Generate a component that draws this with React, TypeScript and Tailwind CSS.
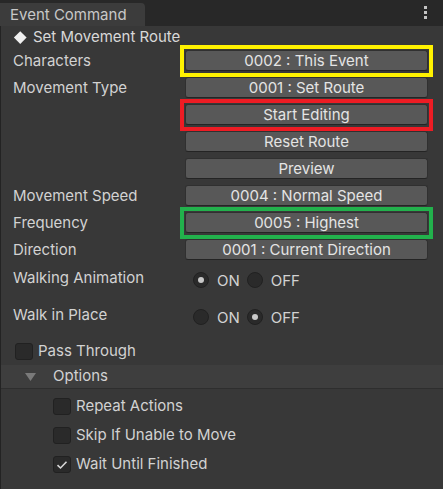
import React from "react";

const font = { fontFamily: "Inter, 'Noto Sans', sans-serif" };

function Btn({ children }: { children: React.ReactNode }) {
  return (
    <div className="w-[243px] h-[21px] rounded-[3px] bg-[#585858] border border-[#303030] border-b-[#242424] flex items-center justify-center text-[#e4e4e4] text-[15px] leading-none">
      {children}
    </div>
  );
}

function Row({ label, children, frame }: { label?: string; children: React.ReactNode; frame?: string }) {
  return (
    <div className="flex items-center h-[20px]">
      <div className="w-[184px] pl-[12px] text-[15px] text-[#d2d2d2] relative top-[1px]">{label}</div>
      <div className="relative">
        {frame && (
          <div className={`absolute left-[-5px] right-[-5px] top-[-5px] bottom-[-6px] border-[4px] ${frame}`} />
        )}
        {children}
      </div>
    </div>
  );
}

function Radio({ on }: { on: boolean }) {
  return (
    <div className="w-[16px] h-[16px] rounded-full bg-[#2a2a2a] border border-[#212121] flex items-center justify-center">
      {on && <div className="w-[6px] h-[6px] rounded-full bg-[#c8c8c8]" />}
    </div>
  );
}

function RadioRow({ label, on }: { label: string; on: boolean }) {
  return (
    <div className="flex items-center h-[20px]">
      <div className="w-[192px] pl-[12px] text-[15px] text-[#d2d2d2] relative top-[1px]">{label}</div>
      <div className="flex items-center mt-[6px]">
        <Radio on={on} />
        <span className="ml-[8px] text-[15px] text-[#d2d2d2] relative top-[1px]">ON</span>
        <div className="ml-[7px]">
          <Radio on={!on} />
        </div>
        <span className="ml-[8px] text-[15px] text-[#d2d2d2] relative top-[1px]">OFF</span>
      </div>
    </div>
  );
}

function Check({ checked }: { checked?: boolean }) {
  return (
    <div className="w-[18px] h-[17px] rounded-[3px] bg-[#2a2a2a] border border-[#212121] flex items-center justify-center">
      {checked && (
        <svg width="12" height="10" viewBox="0 0 12 10">
          <path d="M1.5 5.2 L4.5 8 L10.5 1.8" stroke="#d8d8d8" strokeWidth="1.6" fill="none" />
        </svg>
      )}
    </div>
  );
}

export default function App() {
  return (
    <div className="w-[443px] h-[489px] bg-[#383838] flex flex-col overflow-hidden" style={font}>
      <div className="h-[26px] bg-[#282828] flex items-end relative shrink-0">
        <div className="w-[145px] h-[23px] bg-[#3c3c3c] rounded-tr-[4px] flex items-center pl-[10px] pt-[1px] text-[15px] text-[#c8c8c8]">
          Event Command
        </div>
        <div className="absolute right-[16px] top-[6px] flex flex-col gap-[2px]">
          <div className="w-[3px] h-[3px] bg-[#c4c4c4]" />
          <div className="w-[3px] h-[3px] bg-[#c4c4c4]" />
          <div className="w-[3px] h-[3px] bg-[#c4c4c4]" />
        </div>
      </div>
      <div className="flex flex-col border-l border-[#232323] flex-1">
        <div className="flex items-center h-[20px] mt-[1px] pl-[13px]">
          <div className="w-[12px] h-[12px] flex items-center justify-center">
            <div className="w-[8.5px] h-[8.5px] bg-[#f0f0f0] rotate-45" />
          </div>
          <span className="ml-[7px] text-[15px] text-[#d8d8d8]">Set Movement Route</span>
        </div>
        <div className="flex flex-col gap-[7px] mt-[3px]">
          <Row label="Characters" frame="border-[#fff200]">
            <Btn>0002 : This Event</Btn>
          </Row>
          <Row label="Movement Type">
            <Btn>0001 : Set Route</Btn>
          </Row>
          <Row frame="border-[#ed1c24]">
            <Btn>Start Editing</Btn>
          </Row>
          <Row>
            <Btn>Reset Route</Btn>
          </Row>
          <Row>
            <Btn>Preview</Btn>
          </Row>
          <Row label="Movement Speed">
            <Btn>0004 : Normal Speed</Btn>
          </Row>
          <Row label="Frequency" frame="border-[#22b14c]">
            <Btn>0005 : Highest</Btn>
          </Row>
          <Row label="Direction">
            <Btn>0001 : Current Direction</Btn>
          </Row>
        </div>
        <div className="mt-[8px]">
          <RadioRow label="Walking Animation" on={true} />
        </div>
        <div className="mt-[17px]">
          <RadioRow label="Walk in Place" on={false} />
        </div>
        <div className="flex items-center mt-[17px] pl-[14px] h-[20px]">
          <Check />
          <span className="ml-[5px] text-[15px] text-[#d2d2d2]">Pass Through</span>
        </div>
        <div className="mt-[4px] h-[24px] bg-[#3e3e3e] border-b border-[#2e2e2e] flex items-center pl-[24px]">
          <svg width="11" height="10" viewBox="0 0 11 10">
            <path d="M0 1 L11 1 L5.5 9 Z" fill="#7a7a7a" />
          </svg>
          <span className="ml-[17px] text-[15px] text-[#d2d2d2]">Options</span>
        </div>
        <div className="flex flex-col gap-[10px] mt-[8px] pl-[52px]">
          <div className="flex items-center h-[19px]">
            <Check />
            <span className="ml-[5px] text-[15px] text-[#d2d2d2]">Repeat Actions</span>
          </div>
          <div className="flex items-center h-[19px]">
            <Check />
            <span className="ml-[5px] text-[15px] text-[#d2d2d2]">Skip If Unable to Move</span>
          </div>
          <div className="flex items-center h-[19px]">
            <Check checked />
            <span className="ml-[5px] text-[15px] text-[#d2d2d2]">Wait Until Finished</span>
          </div>
        </div>
      </div>
    </div>
  );
}
